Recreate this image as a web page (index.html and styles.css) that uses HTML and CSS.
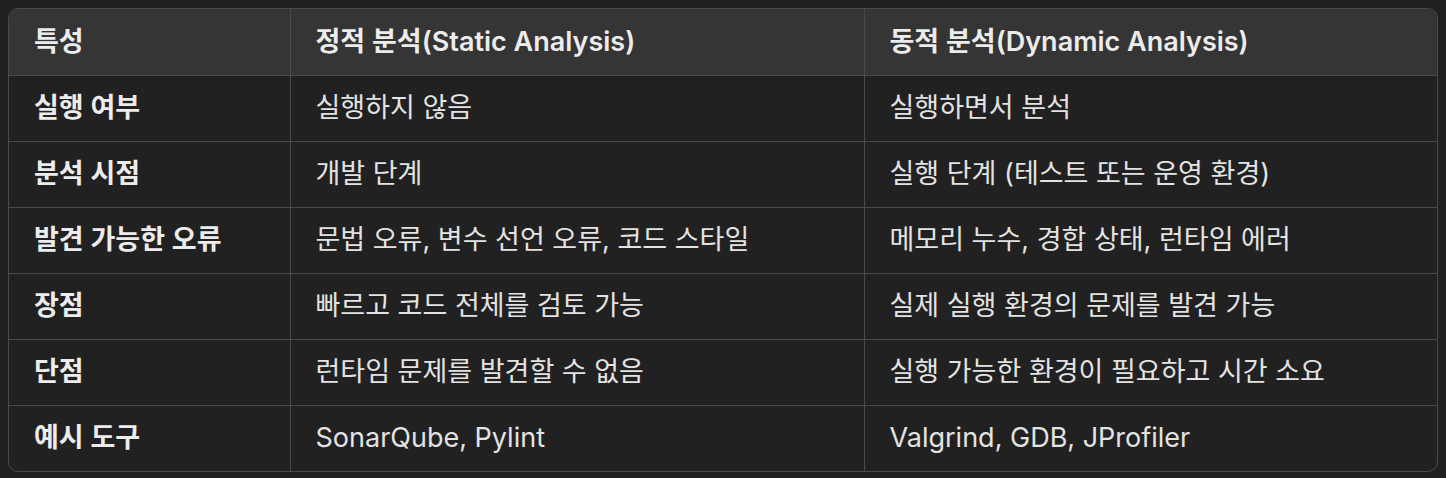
FILE: index.html
```html
<!DOCTYPE html>
<html lang="ko">
<head>
<meta charset="utf-8">
<link rel="stylesheet" href="styles.css">
</head>
<body>
<div class="wrap">
<table class="cmp">
<colgroup><col class="c1"><col class="c2"><col class="c3"></colgroup>
<thead>
<tr><th>특성</th><th>정적 분석(Static Analysis)</th><th>동적 분석(Dynamic Analysis)</th></tr>
</thead>
<tbody>
<tr><td class="k">실행 여부</td><td>실행하지 않음</td><td>실행하면서 분석</td></tr>
<tr><td class="k">분석 시점</td><td>개발 단계</td><td>실행 단계 (테스트 또는 운영 환경)</td></tr>
<tr><td class="k">발견 가능한 오류</td><td>문법 오류, 변수 선언 오류, 코드 스타일</td><td>메모리 누수, 경합 상태, 런타임 에러</td></tr>
<tr><td class="k">장점</td><td>빠르고 코드 전체를 검토 가능</td><td>실제 실행 환경의 문제를 발견 가능</td></tr>
<tr><td class="k">단점</td><td>런타임 문제를 발견할 수 없음</td><td>실행 가능한 환경이 필요하고 시간 소요</td></tr>
<tr><td class="k">예시 도구</td><td>SonarQube, Pylint</td><td>Valgrind, GDB, JProfiler</td></tr>
</tbody>
</table>
</div>
</body>
</html>
```

FILE: styles.css
```css
html, body {
  margin: 0;
  background: #202020;
}
body {
  padding: 8px;
  font-family: "Inter", "Noto Sans CJK KR", sans-serif;
  color: #e6e6e6;
}
.wrap {
  width: 1430px;
  box-sizing: border-box;
  border: 1px solid #4a4a4a;
  border-radius: 10px;
  overflow: hidden;
  background: #212121;
}
.cmp {
  width: 100%;
  border-collapse: collapse;
  table-layout: fixed;
}
.c1 { width: 281px; }
.c2 { width: 574px; }
.c3 { width: 573px; }
.cmp th, .cmp td {
  height: 66px;
  padding: 0 25px;
  text-align: left;
  font-size: 27px;
  line-height: 32px;
  border-right: 1px solid #4a4a4a;
  border-bottom: 1px solid #4a4a4a;
  box-sizing: border-box;
  white-space: nowrap;
}
.cmp th:last-child, .cmp td:last-child { border-right: none; }
.cmp tbody tr:last-child td { border-bottom: none; }
.cmp th {
  background: #353535;
  font-weight: 600;
  color: #ececec;
}
.cmp td {
  font-weight: 400;
  color: #e3e3e3;
}
.cmp td.k {
  font-weight: 600;
  color: #ececec;
}
```
